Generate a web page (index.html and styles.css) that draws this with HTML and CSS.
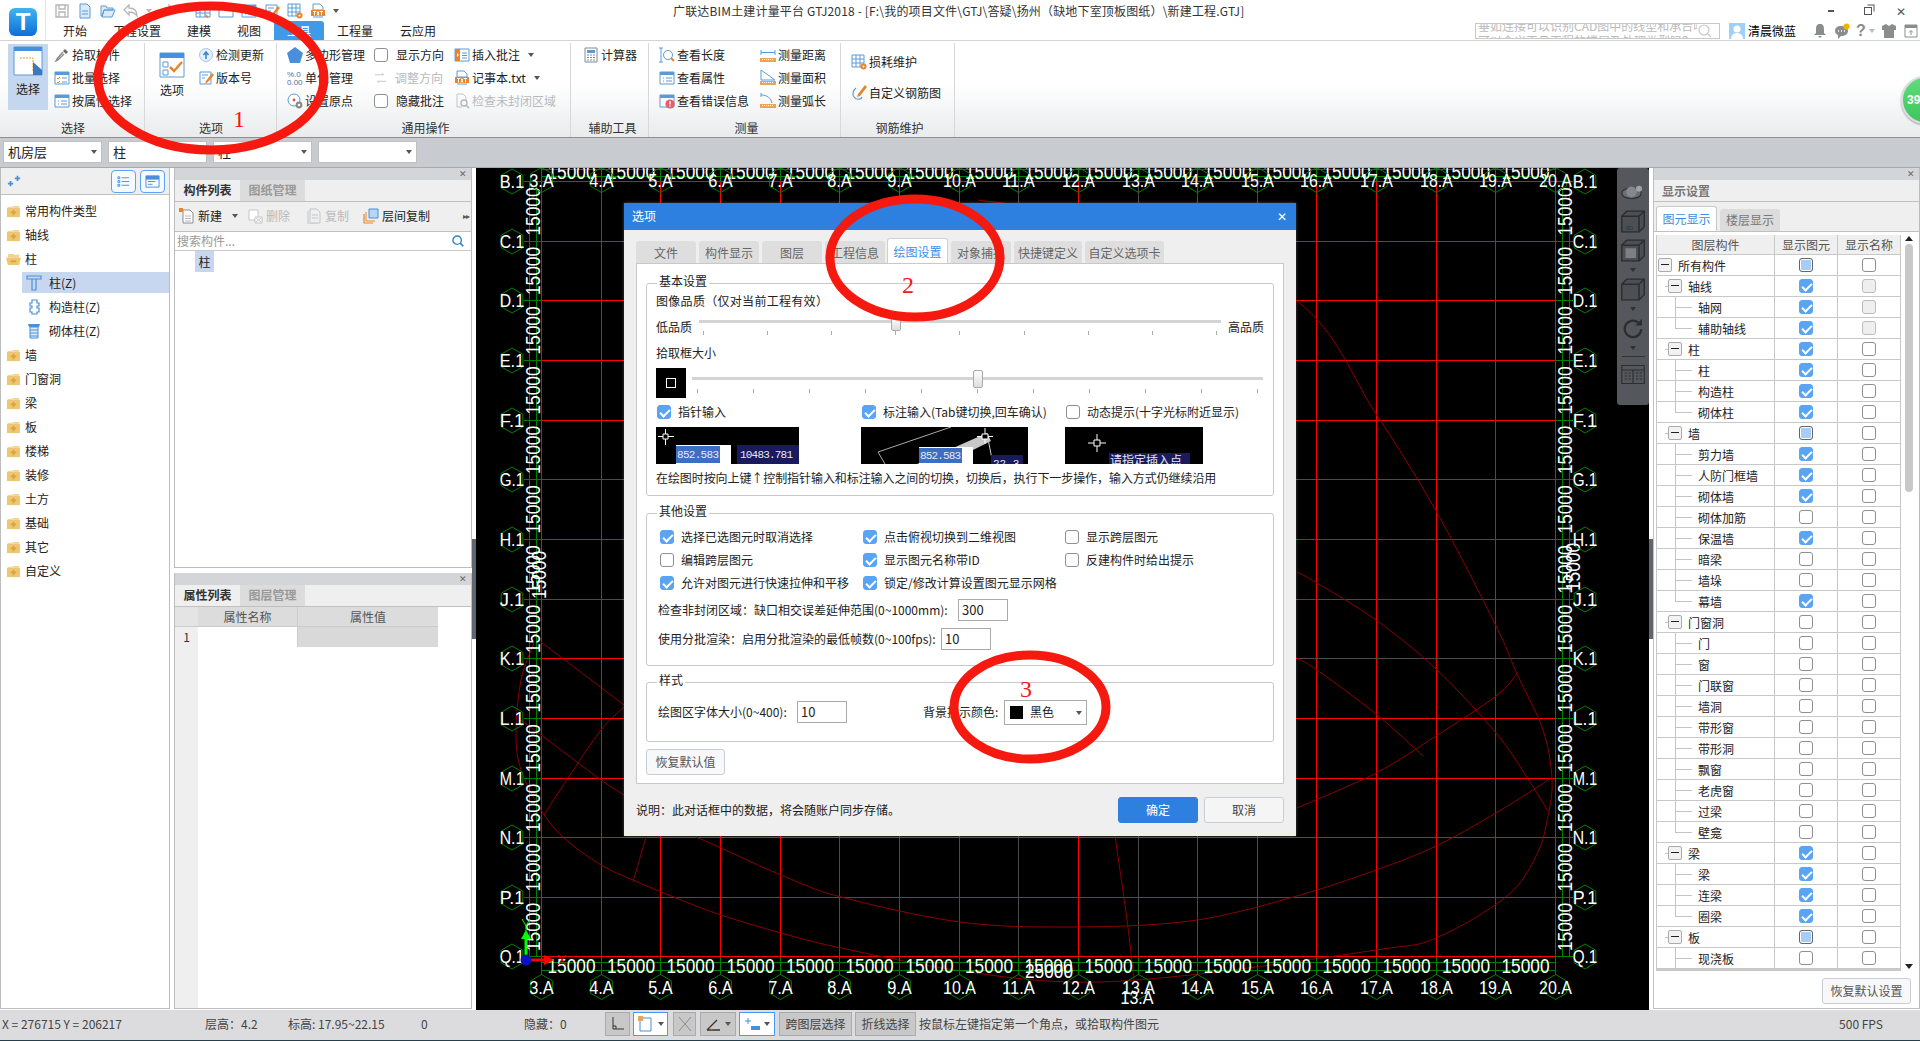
FILE: index.html
```html
<!DOCTYPE html>
<html lang="zh-CN">
  <head>
    <meta charset="UTF-8" />
    <title>广联达BIM土建计量平台 GTJ2018</title>
    <link rel="stylesheet" href="styles.css">
  </head>
  <body>
    <svg class="sprite" width="0" height="0">
      <symbol id="i-folder" viewBox="0 0 16 14"><path d="M2 2h5l1-1h6v2H2z" fill="#f3d28f"/><path d="M1 3h14v10H1z" fill="#efc671"/><path d="M7 5h2v2h2v2H9v2H7V9H5V7h2z" fill="#d9a441"/></symbol>
      <symbol id="i-folder-open" viewBox="0 0 16 14"><path d="M2 1h6l1 1h5v3H2z" fill="#f3d28f"/><path d="M0 5h16l-2 8H2z" fill="#efc671"/><path d="M5 8h6v2H5z" fill="#d9a441"/></symbol>
      <symbol id="i-save" viewBox="0 0 16 16"><path d="M2 2h12v12H2z M5 2v4h6V2 M5 14V9h6v5" fill="none" stroke="#b4b7ba" stroke-width="1.4"/></symbol>
      <symbol id="i-new" viewBox="0 0 16 16"><path d="M3 1h7l3 3v11H3z" fill="#dcebfa" stroke="#5b9bd5"/><path d="M5 8h6M5 11h6" stroke="#5b9bd5"/></symbol>
      <symbol id="i-open" viewBox="0 0 16 16"><path d="M1 3h5l1 2h6v2H4l-2 6H1z M4 7h11l-3 7H2z" fill="#dcebfa" stroke="#5b9bd5"/></symbol>
      <symbol id="i-undo" viewBox="0 0 16 16"><path d="M6 2 1 7l5 5V9c3 0 6 1 8 4 0-5-3-8-8-8z" fill="none" stroke="#b4b7ba" stroke-width="1.3"/></symbol>
      <symbol id="i-redo" viewBox="0 0 16 16"><path d="M10 2l5 5-5 5V9C7 9 4 10 2 13c0-5 3-8 8-8z" fill="none" stroke="#b4b7ba" stroke-width="1.3"/></symbol>
      <symbol id="i-grid" viewBox="0 0 16 16"><path d="M1 2h14v12H1z M1 6h14 M1 10h14 M5 2v12 M10 2v12" fill="none" stroke="#5b9bd5"/><path d="M9 10l5 4-2 1z" fill="#e8842b"/></symbol>
      <symbol id="i-win" viewBox="0 0 16 16"><path d="M1 2h14v12H1z" fill="#fff" stroke="#5b9bd5"/><path d="M1 2h14v3H1z" fill="#5b9bd5"/></symbol>
      <symbol id="i-win-check" viewBox="0 0 16 16"><use href="#i-win"/><path d="M3 8l1 1 2-2M3 12l1 1 2-2" fill="none" stroke="#e8842b"/><path d="M8 8h5M8 12h5" stroke="#5b9bd5"/></symbol>
      <symbol id="i-win-list" viewBox="0 0 16 16"><use href="#i-win"/><path d="M4 8h1M4 11h1M7 8h6M7 11h6" stroke="#5b9bd5"/></symbol>
      <symbol id="i-win-err" viewBox="0 0 16 16"><use href="#i-win"/><circle cx="11" cy="11" r="4.6" fill="#e2606a"/><path d="M11 8v3.4M11 12.6v1.2" stroke="#fff" stroke-width="1.4"/></symbol>
      <symbol id="i-picker" viewBox="0 0 16 16"><path d="M11 2l3 3-2 2-3-3z" fill="#666"/><path d="M9 5 3 12l-1 2 2-1 6-6" fill="none" stroke="#8a8d90" stroke-width="1.4"/></symbol>
      <symbol id="i-update" viewBox="0 0 16 16"><circle cx="8" cy="8" r="6.5" fill="#e6f0fa" stroke="#a8c6e6"/><path d="M8 12V6M5.5 8 8 5l2.5 3" fill="none" stroke="#3d85d0" stroke-width="1.6"/></symbol>
      <symbol id="i-version" viewBox="0 0 16 16"><path d="M2 2h11v12H2z M4 5h6 M4 8h3" fill="none" stroke="#5b9bd5"/><path d="M14 3 8 11l-1 3 3-2 6-7z" fill="#e8842b"/></symbol>
      <symbol id="i-pentagon" viewBox="0 0 16 16"><path d="M8 0l8 6-3 10H3L0 6z" fill="#4a8fdc"/></symbol>
      <symbol id="i-origin" viewBox="0 0 16 16"><circle cx="7" cy="7" r="6" fill="#fff" stroke="#5b9bd5"/><circle cx="7" cy="7" r="1.4" fill="#d9534f"/><circle cx="12" cy="12" r="3.4" fill="#8a8d90"/><circle cx="12" cy="12" r="1.2" fill="#fff"/></symbol>
      <symbol id="i-note" viewBox="0 0 16 16"><path d="M1 2h14v12H1z" fill="#fff" stroke="#5b9bd5"/><path d="M1 2h5v12H1z" fill="#e8842b"/><path d="M3 6l2 2-2 2z" fill="#fff"/><path d="M8 6h5M8 8.5h5M8 11h5" stroke="#5b9bd5"/></symbol>
      <symbol id="i-txt" viewBox="0 0 16 16"><path d="M3 1h7l3 3v3H3z" fill="#fff" stroke="#5b9bd5"/><path d="M1 7h14v6H1z" fill="#e8842b"/><path d="M3 14h10" stroke="#5b9bd5"/><path d="M3 8.500h3M4.500 8.500v4M7 8.500l2 4M9 8.500l-2 4M10 8.500h3M11.500 8.500v4" stroke="#fff" fill="none"/></symbol>
      <symbol id="i-arrows" viewBox="0 0 16 16"><path d="M1 4h11l-2-2M15 12H4l2 2" fill="none" stroke="#c3c5c7" stroke-width="1.2"/></symbol>
      <symbol id="i-check-gap" viewBox="0 0 16 16"><path d="M3 1h6l3 3v4M3 1v13h5" fill="none" stroke="#c3c5c7"/><circle cx="10" cy="10" r="3" fill="none" stroke="#b4b7ba" stroke-width="1.3"/><path d="M12 12l3 3" stroke="#b4b7ba" stroke-width="1.5"/></symbol>
      <symbol id="i-calc" viewBox="0 0 16 16"><path d="M2 1h12v14H2z" fill="#fff" stroke="#7c8b9a"/><path d="M4 3h8v3H4z" fill="#5b9bd5"/><path d="M4 8h2M7 8h2M10 8h2M4 10.500h2M7 10.500h2M10 10.500h2M4 13h2M7 13h2M10 13h2" stroke="#7c8b9a"/></symbol>
      <symbol id="i-look-len" viewBox="0 0 16 16"><path d="M2 1v14M0 1h4M0 15h4" fill="none" stroke="#5b9bd5"/><circle cx="9" cy="8" r="4.500" fill="#fff" stroke="#5b9bd5"/><path d="M12 11l3 3" stroke="#e8842b" stroke-width="2"/></symbol>
      <symbol id="i-ruler" viewBox="0 0 16 16"><path d="M0 11h16v4H0z" fill="#e8a35f"/><path d="M2 12.500h12" stroke="#fff" stroke-dasharray="1 1"/></symbol>
      <symbol id="i-m-dist" viewBox="0 0 16 16"><use href="#i-ruler"/><path d="M1 3v5M15 3v5M1 5.500h14" fill="none" stroke="#5b9bd5"/></symbol>
      <symbol id="i-m-area" viewBox="0 0 16 16"><use href="#i-ruler"/><path d="M1 0v10h14z" fill="#fff" stroke="#5b9bd5"/></symbol>
      <symbol id="i-m-arc" viewBox="0 0 16 16"><use href="#i-ruler"/><path d="M1 2c6 0 10 3 11 8M1 0v4" fill="none" stroke="#5b9bd5"/></symbol>
      <symbol id="i-loss" viewBox="0 0 16 16"><path d="M1 1h12v12H1z M1 5h12 M1 9h12 M5 1v12 M9 1v12" fill="#fff" stroke="#5b9bd5"/><circle cx="12.500" cy="12.500" r="3" fill="#e8842b"/><circle cx="12.500" cy="12.500" r="1" fill="#fff"/></symbol>
      <symbol id="i-rebar" viewBox="0 0 16 16"><path d="M5 3C2 5 1 9 3 12s7 3 8 0" fill="none" stroke="#5b9bd5" stroke-width="1.2"/><path d="M14 0 7 9l-1 3 3-1 7-9z" fill="#e8842b"/></symbol>
      <symbol id="i-doc-new" viewBox="0 0 16 16"><path d="M4 2h7l3 3v10H4z" fill="#fff" stroke="#8a8d90"/><path d="M6 8h6M6 10.500h6M6 13h6" stroke="#b4b7ba"/><path d="M0 0h4v4H0z" fill="#e8842b"/></symbol>
      <symbol id="i-doc-del" viewBox="0 0 16 16"><path d="M2 2h9v10H2z" fill="#fff" stroke="#c3c5c7"/><path d="M8 9h7v6H8zM9 10l5 4M14 10l-5 4" fill="#fff" stroke="#c3c5c7"/></symbol>
      <symbol id="i-doc-copy" viewBox="0 0 16 16"><path d="M4 1h7l3 3v11H4z M2 3v13h9 M6 7h6 M6 10h6" fill="none" stroke="#c3c5c7"/></symbol>
      <symbol id="i-layer-copy" viewBox="0 0 16 16"><path d="M1 6v9h9" fill="none" stroke="#e8842b" stroke-width="1.2"/><path d="M3 4v9h9" fill="none" stroke="#e8842b"/><path d="M6 1h9v9H6z" fill="#b7d6f6" stroke="#4a8fdc"/></symbol>
      <symbol id="i-search" viewBox="0 0 16 16"><circle cx="7" cy="7" r="4.800" fill="none" stroke="#2f86c9" stroke-width="1.600"/><path d="M10.500 10.500 14 14" stroke="#2f86c9" stroke-width="2"/></symbol>
      <symbol id="i-col" viewBox="0 0 16 16"><path d="M1 1h14v3H1z M5 4h6 M6 4v11h4V4" fill="none" stroke="#4a90d9" stroke-width="1.200"/></symbol>
      <symbol id="i-col-struct" viewBox="0 0 16 16"><path d="M6 1h5v3h2v3h-2v2h2v4h-2v2H6v-2H4V9h2V7H4V4h2z" fill="none" stroke="#4a90d9" stroke-width="1.200"/></symbol>
      <symbol id="i-col-brick" viewBox="0 0 16 16"><path d="M2 1h12l-1 3H3z" fill="#4a90d9"/><path d="M4 4h8v11H4z M4 7h8 M4 10h8 M4 13h8" fill="#dcebfa" stroke="#4a90d9"/></symbol>
      <symbol id="i-cube" viewBox="0 0 32 30"><path d="M1 8h23v21H1z M1 8l7-7h23v21l-7 7 M24 8l7-7" fill="#4c5054" stroke="#2b2e31" stroke-width="2"/></symbol>
    </svg>

    <header class="titlebar">
      <div class="logo-cell">
        <div class="logo">T</div>
      </div>
      <div class="title-main">
        <div class="qat-row">
          <div class="qat">
            <svg class="ic"><use href="#i-save"/></svg>
            <svg class="ic"><use href="#i-new"/></svg>
            <svg class="ic"><use href="#i-open"/></svg>
            <svg class="ic"><use href="#i-undo"/></svg>
            <span class="caret gray"></span>
            <svg class="ic"><use href="#i-redo"/></svg>
            <span class="caret gray"></span>
            <svg class="ic"><use href="#i-grid"/></svg>
            <svg class="ic"><use href="#i-win"/></svg>
            <svg class="ic"><use href="#i-win-list"/></svg>
            <svg class="ic"><use href="#i-version"/></svg>
            <svg class="ic"><use href="#i-loss"/></svg>
            <svg class="ic"><use href="#i-txt"/></svg>
            <span class="caret"></span>
          </div>
          <div class="app-title">广联达BIM土建计量平台 GTJ2018 - [F:\我的项目文件\GTJ\答疑\扬州（缺地下室顶板图纸）\新建工程.GTJ]</div>
          <div class="win-btns">
            <span class="win-min"></span>
            <span class="win-max"></span>
            <span class="win-close">✕</span>
          </div>
        </div>
        <div class="tab-row">
          <nav class="ribbon-tabs">
            <span class="rtab t-a">开始</span>
            <span class="rtab t-b">工程设置</span>
            <span class="rtab t-c">建模</span>
            <span class="rtab t-d">视图</span>
            <span class="rtab t-e active">工具</span>
            <span class="rtab t-f">工程量</span>
            <span class="rtab t-g">云应用</span>
          </nav>
          <div class="help-search">
            <div class="help-text">
              <span>垂如连接可以识别CAD图中的线型和承台吗？</span>
              <span>可以个义工且工程的楼层及处理类型吗？</span>
            </div>
            <svg class="ic search-gray" viewBox="0 0 16 16"><circle cx="7" cy="7" r="5" fill="none" stroke="#c8c8c8" stroke-width="1.200"/><path d="M11 11l3 3" stroke="#c8c8c8" stroke-width="1.200"/></svg>
          </div>
          <div class="avatar"><svg viewBox="0 0 16 16"><path d="M0 0h16v16H0z" fill="#9fd0f7"/><circle cx="8" cy="6" r="3.500" fill="#fff"/><path d="M2 16c0-4 3-6 6-6s6 2 6 6z" fill="#fff"/></svg></div>
          <span class="user-name">清晨微蓝</span>
          <div class="user-icons">
            <svg class="ic" viewBox="0 0 16 16"><path d="M8 1c3 0 4 2 4 5v4l2 2H2l2-2V6c0-3 1-5 4-5zM6 13h4l-2 2z" fill="#8a8d90"/></svg>
            <svg class="ic" viewBox="0 0 16 16"><path d="M7 3c4 0 7 2 7 5s-3 5-7 5l-3 3v-4C2 11 1 10 1 8c0-3 2-5 6-5z" fill="#8a8d90"/><circle cx="12.500" cy="3.500" r="3" fill="#f0b400"/><path d="M4 8h1M7 8h1M10 8h1" stroke="#fff" stroke-width="1.500"/></svg>
            <span class="help-mark">?</span><span class="caret gray"></span>
            <svg class="ic" viewBox="0 0 16 16"><path d="M5 1 1 3v4h2v8h10V7h2V3l-4-2-3 2z" fill="#8a8d90"/></svg>
            <svg class="ic" viewBox="0 0 16 16"><path d="M2 2h12v12H2z" fill="#fff" stroke="#8a8d90"/><path d="M2 2h12v3H2z" fill="#8a8d90"/><path d="M8 12V8M6 9.500 8 7.500l2 2" fill="none" stroke="#8a8d90"/></svg>
          </div>
        </div>
      </div>
    </header>

    <section class="ribbon">
      <div class="rb-group g-select">
        <div class="rb-body">
          <div class="rb-big selected">
            <svg class="big-ic" viewBox="0 0 30 30"><path d="M1 1h28v28H1z" fill="#fff" stroke="#5b9bd5"/><path d="M1 1h28v4H1z" fill="#4a8fdc"/><path d="M7 12h13v14" fill="none" stroke="#e8a01f" stroke-dasharray="2 1"/><path d="M20 16l9 8v5h-9z" fill="#3a78c2"/></svg>
            <span>选择</span>
          </div>
          <div class="rb-col">
            <div class="rb-item"><svg class="ic"><use href="#i-picker"/></svg>拾取构件</div>
            <div class="rb-item"><svg class="ic"><use href="#i-win-check"/></svg>批量选择</div>
            <div class="rb-item"><svg class="ic"><use href="#i-win-list"/></svg>按属性选择</div>
          </div>
        </div>
        <div class="rb-label">选择</div>
      </div>
      <div class="rb-group g-option">
        <div class="rb-body">
          <div class="rb-big plain">
            <svg class="big-ic opt" viewBox="0 0 26 26"><path d="M1 1h24v24H1z" fill="#fff" stroke="#5b9bd5"/><path d="M1 1h24v5H1z" fill="#4a8fdc"/><path d="M4 10h5v5H4z M4 18h5v5H4z" fill="none" stroke="#5b9bd5"/><path d="M11 15l4 4 8-9" fill="none" stroke="#e8842b" stroke-width="2.500"/></svg>
            <span>选项</span>
          </div>
          <div class="rb-col">
            <div class="rb-item"><svg class="ic"><use href="#i-update"/></svg>检测更新</div>
            <div class="rb-item"><svg class="ic"><use href="#i-version"/></svg>版本号</div>
          </div>
        </div>
        <div class="rb-label">选项</div>
      </div>
      <div class="rb-group g-common">
        <div class="rb-body">
          <div class="rb-col w-87">
            <div class="rb-item"><svg class="ic"><use href="#i-pentagon"/></svg>多边形管理</div>
            <div class="rb-item"><svg class="ic" viewBox="0 0 16 16"><text class="unit-text" x="0" y="7">%.0</text><text class="unit-text" x="0" y="15">0.00</text></svg>单位管理</div>
            <div class="rb-item"><svg class="ic"><use href="#i-origin"/></svg>设置原点</div>
          </div>
          <div class="rb-col w-80">
            <div class="rb-item tight"><span class="cb"></span>显示方向</div>
            <div class="rb-item tight dim"><svg class="ic"><use href="#i-arrows"/></svg>调整方向</div>
            <div class="rb-item tight"><span class="cb"></span>隐藏批注</div>
          </div>
          <div class="rb-col">
            <div class="rb-item"><svg class="ic"><use href="#i-note"/></svg>插入批注<span class="caret"></span></div>
            <div class="rb-item"><svg class="ic"><use href="#i-txt"/></svg>记事本.txt<span class="caret"></span></div>
            <div class="rb-item dim"><svg class="ic"><use href="#i-check-gap"/></svg>检查未封闭区域</div>
          </div>
        </div>
        <div class="rb-label">通用操作</div>
      </div>
      <div class="rb-group g-aux">
        <div class="rb-body">
          <div class="rb-col">
            <div class="rb-item"><svg class="ic"><use href="#i-calc"/></svg>计算器</div>
          </div>
        </div>
        <div class="rb-label">辅助工具</div>
      </div>
      <div class="rb-group g-measure">
        <div class="rb-body">
          <div class="rb-col w-101">
            <div class="rb-item"><svg class="ic"><use href="#i-look-len"/></svg>查看长度</div>
            <div class="rb-item"><svg class="ic"><use href="#i-win-list"/></svg>查看属性</div>
            <div class="rb-item"><svg class="ic"><use href="#i-win-err"/></svg>查看错误信息</div>
          </div>
          <div class="rb-col">
            <div class="rb-item"><svg class="ic"><use href="#i-m-dist"/></svg>测量距离</div>
            <div class="rb-item"><svg class="ic"><use href="#i-m-area"/></svg>测量面积</div>
            <div class="rb-item"><svg class="ic"><use href="#i-m-arc"/></svg>测量弧长</div>
          </div>
        </div>
        <div class="rb-label">测量</div>
      </div>
      <div class="rb-group g-rebar">
        <div class="rb-body">
          <div class="rb-col wide-rows">
            <div class="rb-item"><svg class="ic"><use href="#i-loss"/></svg>损耗维护</div>
            <div class="rb-item"><svg class="ic"><use href="#i-rebar"/></svg>自定义钢筋图</div>
          </div>
        </div>
        <div class="rb-label">钢筋维护</div>
      </div>
    </section>

    <div class="combo-bar">
      <div class="combo">机房层<span class="caret"></span></div>
      <div class="combo">柱<span class="caret"></span></div>
      <div class="combo">柱<span class="caret"></span></div>
      <div class="combo"><span class="caret"></span></div>
    </div>

    <main class="workspace">
      <aside class="nav-panel">
        <div class="nav-head">
          <svg class="ic plus-pair" viewBox="0 0 16 16"><path d="M3 8h2v2h2v2H5v2H3v-2H1v-2h2zM11 2h2v2h2v2h-2v2h-2V6H9V4h2z" fill="#4a8fdc"/></svg>
          <div class="nav-btns">
            <span class="nav-btn"><svg viewBox="0 0 16 16"><path d="M2 3h2v2H2zM2 7h2v2H2zM2 11h2v2H2zM6 4h8M6 8h8M6 12h8" fill="none" stroke="#4a8fdc"/></svg></span>
            <span class="nav-btn"><svg viewBox="0 0 16 16"><path d="M1 2h14v12H1z" fill="none" stroke="#4a8fdc"/><path d="M1 2h14v4H1z" fill="#4a8fdc"/><path d="M3 8h8M3 11h5" stroke="#4a8fdc"/></svg></span>
          </div>
        </div>
        <ul class="tree">
          <li class="tree-row"><svg class="fold"><use href="#i-folder"/></svg>常用构件类型</li>
          <li class="tree-row"><svg class="fold"><use href="#i-folder"/></svg>轴线</li>
          <li class="tree-row"><svg class="fold"><use href="#i-folder-open"/></svg>柱</li>
          <li class="tree-row sub sel"><svg class="ic"><use href="#i-col"/></svg>柱(Z)</li>
          <li class="tree-row sub"><svg class="ic"><use href="#i-col-struct"/></svg>构造柱(Z)</li>
          <li class="tree-row sub"><svg class="ic"><use href="#i-col-brick"/></svg>砌体柱(Z)</li>
          <li class="tree-row"><svg class="fold"><use href="#i-folder"/></svg>墙</li>
          <li class="tree-row"><svg class="fold"><use href="#i-folder"/></svg>门窗洞</li>
          <li class="tree-row"><svg class="fold"><use href="#i-folder"/></svg>梁</li>
          <li class="tree-row"><svg class="fold"><use href="#i-folder"/></svg>板</li>
          <li class="tree-row"><svg class="fold"><use href="#i-folder"/></svg>楼梯</li>
          <li class="tree-row"><svg class="fold"><use href="#i-folder"/></svg>装修</li>
          <li class="tree-row"><svg class="fold"><use href="#i-folder"/></svg>土方</li>
          <li class="tree-row"><svg class="fold"><use href="#i-folder"/></svg>基础</li>
          <li class="tree-row"><svg class="fold"><use href="#i-folder"/></svg>其它</li>
          <li class="tree-row"><svg class="fold"><use href="#i-folder"/></svg>自定义</li>
        </ul>
      </aside>

      <div class="mid-col">
        <section class="panel list-panel">
          <div class="dock-bar"><span class="dock-x">✕</span></div>
          <div class="panel-tabs">
            <span class="ptab active">构件列表</span>
            <span class="ptab">图纸管理</span>
          </div>
          <div class="list-tools">
            <span class="tool w-new"><svg class="ic"><use href="#i-doc-new"/></svg>新建<span class="caret"></span></span>
            <span class="tool off w-del"><svg class="ic"><use href="#i-doc-del"/></svg>删除</span>
            <span class="tool off w-copy"><svg class="ic"><use href="#i-doc-copy"/></svg>复制</span>
            <span class="tool"><svg class="ic"><use href="#i-layer-copy"/></svg>层间复制</span>
            <span class="more">▸▸</span>
          </div>
          <div class="search-row">
            <span>搜索构件...</span>
            <svg class="ic"><use href="#i-search"/></svg>
          </div>
          <div class="list-body">
            <span class="list-item">柱</span>
          </div>
        </section>
        <section class="panel prop-panel">
          <div class="dock-bar"><span class="dock-x">✕</span></div>
          <div class="panel-tabs">
            <span class="ptab active">属性列表</span>
            <span class="ptab">图层管理</span>
          </div>
          <div class="prop-body">
            <div class="prop-index">
              <div class="prop-corner"></div>
              <div class="prop-num">1</div>
            </div>
            <div class="prop-table">
              <div class="prop-head"><span class="c-name">属性名称</span><span class="c-val">属性值</span></div>
              <div class="prop-line"><span class="c-name"></span><span class="c-val filled"></span></div>
            </div>
          </div>
        </section>
      </div>

      <div class="splitter"></div>

      <div class="canvas-wrap">
        <svg id="cad" class="cad" viewBox="476 168 1173 842"></svg>
        <div class="view-tools">
          <svg viewBox="0 0 32 22"><ellipse cx="14" cy="12" rx="13" ry="7" fill="#6a6e72" stroke="#2b2e31" stroke-width="1.500"/><circle cx="14" cy="10" r="7" fill="#85898d"/><circle cx="24" cy="6" r="4" fill="#a0a4a8"/></svg>
          <svg viewBox="0 0 32 30"><use href="#i-cube"/><text class="cube-text" x="6" y="26">3D</text></svg>
          <svg viewBox="0 0 32 30"><use href="#i-cube"/><path d="M6 12h14v13H6z" fill="#7c8084"/></svg>
          <span class="caret dark"></span>
          <svg viewBox="0 0 32 30"><use href="#i-cube"/></svg>
          <span class="caret dark"></span>
          <svg viewBox="0 0 32 30"><path d="M27 16a11 11 0 1 1-4-9" fill="none" stroke="#2b2e31" stroke-width="3"/><path d="M28 2v9h-9z" fill="#2b2e31"/></svg>
          <span class="caret dark"></span>
          <div class="view-sep"></div>
          <svg viewBox="0 0 32 30"><path d="M1 3h30v24H1z M1 9h30 M16 9v18 M5 13h3M5 17h3M5 21h3M10 13h3M10 17h3M10 21h3M20 13h3M20 17h3M20 21h3M25 13h3M25 17h3M25 21h3" fill="none" stroke="#2b2e31" stroke-width="1.500"/></svg>
        </div>
      </div>

      <div class="splitter"></div>

      <aside class="display-panel">
        <div class="dock-bar"><span class="dock-x">✕</span></div>
        <div class="display-title">显示设置</div>
        <div class="display-tabs">
          <span class="dtab active">图元显示</span>
          <span class="dtab">楼层显示</span>
        </div>
        <div class="display-table">
          <div class="dt-main">
            <div class="dt-head">
              <span class="dt-c1">图层构件</span>
              <span class="dt-c2">显示图元</span>
              <span class="dt-c3">显示名称</span>
            </div>
            <div id="layerRows"></div>
          </div>
          <div class="dt-scroll">
            <span class="arrow-up"></span>
            <span class="dt-thumb"></span>
            <span class="arrow-down"></span>
          </div>
        </div>
        <div class="display-foot"><button class="reset-btn">恢复默认设置</button></div>
      </aside>
    </main>

    <footer class="statusbar">
      <span class="st-xy">X = 276715 Y = 206217</span>
      <span class="st-h">层高：4.2</span>
      <span class="st-z">标高: 17.95~22.15</span>
      <span class="st-n">0</span>
      <span class="st-hide">隐藏：0</span>
      <span class="st-btn s-1"><svg class="ic" viewBox="0 0 16 16"><path d="M3 1v12h11M3 10h3v3" fill="none" stroke="#333"/></svg></span>
      <span class="st-btn on s-2"><svg class="ic" viewBox="0 0 16 16"><path d="M2 2h11v13H2z" fill="#fff" stroke="#4a8fdc"/><path d="M0 0h5v5H0z" fill="#e8a35f"/></svg><span class="caret"></span></span>
      <span class="st-btn s-3"><svg class="ic" viewBox="0 0 16 16"><path d="M2 1l12 14M14 1 2 15" stroke="#8a8d90"/></svg></span>
      <span class="st-btn s-4"><svg class="ic" viewBox="0 0 16 16"><path d="M2 14h13M2 14 12 4" stroke="#333" stroke-width="1.300"/><path d="M5 11l2 3" stroke="#e8842b"/></svg><span class="caret"></span></span>
      <span class="st-btn on s-5"><svg class="ic" viewBox="0 0 16 16"><path d="M1 5h6M4 2v6" stroke="#4a8fdc"/><path d="M7 10h9v4H7z" fill="#4a8fdc"/></svg><span class="caret"></span></span>
      <span class="st-btn text s-6">跨图层选择</span>
      <span class="st-btn text s-7">折线选择</span>
      <span class="st-hint">按鼠标左键指定第一个角点，或拾取构件图元</span>
      <span class="st-fps">500 FPS</span>
    </footer>

    <!-- Options dialog floats above the drawing -->
    <div class="dialog">
      <div class="dlg-title"><span>选项</span><span class="dlg-x">✕</span></div>
      <div class="dlg-tabs">
        <span class="dtb">文件</span>
        <span class="dtb">构件显示</span>
        <span class="dtb">图层</span>
        <span class="dtb">工程信息</span>
        <span class="dtb active">绘图设置</span>
        <span class="dtb">对象捕捉</span>
        <span class="dtb w68">快捷键定义</span>
        <span class="dtb w79">自定义选项卡</span>
      </div>
      <div class="dlg-page">
        <div class="group g-basic">
          <span class="legend">基本设置</span>
          <div class="line wide-line">图像品质（仅对当前工程有效）</div>
          <div class="slider-row quality">
            <span>低品质</span>
            <div class="slider s-quality">
              <span class="handle"></span>
              <div class="ticks"><i></i><i></i><i></i><i></i><i></i><i></i><i></i><i></i><i></i></div>
            </div>
            <span>高品质</span>
          </div>
          <div class="line pick-title">拾取框大小</div>
          <div class="slider-row pick">
            <span class="pick-box"><i></i></span>
            <div class="slider s-pick">
              <span class="handle"></span>
              <div class="ticks"><i></i><i></i><i></i><i></i><i></i><i></i><i></i><i></i><i></i><i></i><i></i></div>
            </div>
          </div>
          <div class="three-col checks-top">
            <label class="chk"><span class="cb on"></span>指针输入</label>
            <label class="chk"><span class="cb on"></span>标注输入(Tab键切换,回车确认)</label>
            <label class="chk"><span class="cb"></span>动态提示(十字光标附近显示)</label>
          </div>
          <div class="three-col previews">
            <svg class="prev" width="143" height="37">
              <path d="M9.500 2v16M2 9.500h16" stroke="#fff"/><path d="M7 7h5v5H7z" fill="#000" stroke="#fff"/>
              <path d="M20 18h55v19H20z" fill="#fff"/><path d="M20 19h44v17H20z" fill="#3a6fc4"/>
              <text class="pv-text" x="21" y="31" textLength="42">852.583</text>
              <path d="M81 18h62v19H81z" fill="#1a1a5e"/>
              <text class="pv-text" x="84" y="31" textLength="53">10483.781</text>
            </svg>
            <svg class="prev" width="167" height="37">
              <path d="M17 25 90 0M17 25l7 12" stroke="#aaa" fill="none"/>
              <path d="M56 37 126 6l4 8-46 23z" fill="#c8c8c8"/>
              <path d="M124 1v16M116 9.500h16" stroke="#fff"/><path d="M121 7h6v5h-6z" fill="#000" stroke="#fff"/>
              <path d="M127 12l5 25" stroke="#ccc"/>
              <path d="M58 20h54v17H58z" fill="#fff"/><path d="M58 21h43v15H58z" fill="#3a6fc4"/>
              <text class="pv-text" x="59" y="32" textLength="41">852.583</text>
              <path d="M130 28h32v9h-32z" fill="#1a1a5e"/>
              <text class="pv-text" x="132" y="40">22.3</text>
            </svg>
            <svg class="prev" width="138" height="37">
              <path d="M32 7v18M23 16h18" stroke="#fff"/><path d="M29 13h6v6h-6z" fill="#000" stroke="#fff"/>
              <path d="M44 26h81v11H44z" fill="#1a1a5e"/>
              <text class="pv-text cjk" x="45" y="38">请指定插入点</text>
            </svg>
          </div>
          <div class="line tip">在绘图时按向上键↑控制指针输入和标注输入之间的切换，切换后，执行下一步操作，输入方式仍继续沿用</div>
        </div>

        <div class="group g-other">
          <span class="legend">其他设置</span>
          <div class="three-col other-checks">
            <label class="chk"><span class="cb on"></span>选择已选图元时取消选择</label>
            <label class="chk"><span class="cb on"></span>点击俯视切换到二维视图</label>
            <label class="chk"><span class="cb"></span>显示跨层图元</label>
            <label class="chk"><span class="cb"></span>编辑跨层图元</label>
            <label class="chk"><span class="cb on"></span>显示图元名称带ID</label>
            <label class="chk"><span class="cb"></span>反建构件时给出提示</label>
            <label class="chk"><span class="cb on"></span>允许对图元进行快速拉伸和平移</label>
            <label class="chk"><span class="cb on"></span>锁定/修改计算设置图元显示网格</label>
          </div>
          <div class="field-row"><span class="lab-a">检查非封闭区域：缺口相交误差延伸范围(0~1000mm):</span><span class="input">300</span></div>
          <div class="field-row"><span class="lab-b">使用分批渲染：启用分批渲染的最低帧数(0~100fps):</span><span class="input">10</span></div>
        </div>

        <div class="group g-style">
          <span class="legend">样式</span>
          <div class="field-row style-row">
            <span class="lab-c">绘图区字体大小(0~400):</span><span class="input">10</span>
            <span class="bg-label">背景提示颜色:</span>
            <span class="color-select"><i class="swatch"></i>黑色<span class="caret"></span></span>
          </div>
        </div>

        <button class="reset-btn small">恢复默认值</button>
      </div>
      <div class="dlg-foot">
        <span class="dlg-note">说明：此对话框中的数据，将会随账户同步存储。</span>
        <button class="btn-ok">确定</button>
        <button class="btn-cancel">取消</button>
      </div>
    </div>

    <div class="ball">39</div>

    <!-- Hand drawn red marks on top of the whole screenshot -->
    <svg class="marks" viewBox="0 0 1920 1041">
      <ellipse cx="211" cy="78" rx="113" ry="72"/>
      <ellipse cx="915" cy="258" rx="85" ry="59"/>
      <ellipse cx="1030" cy="707" rx="76" ry="52"/>
      <text x="239" y="127">1</text>
      <text x="908" y="293">2</text>
      <text x="1026" y="697">3</text>
    </svg>

    <script src="script.js"></script>
  </body>
</html>
```

FILE: styles.css
```css
* { box-sizing: border-box; }
html, body {
  margin: 0;
  padding: 0;
  width: 1920px;
  height: 1041px;
  overflow: hidden;
}
body {
  position: relative;
  display: flex;
  flex-direction: column;
  background: #fff;
  color: #222;
  font-family: "Noto Sans CJK SC", "Liberation Sans", sans-serif;
  font-size: 12px;
  line-height: 16px;
}
.sprite { position: absolute; }
.ic { width: 16px; height: 16px; flex: none; }

.caret {
  display: inline-block;
  width: 0;
  height: 0;
  border-left: 3px solid transparent;
  border-right: 3px solid transparent;
  border-top: 4px solid #555;
}
.caret.gray { border-top-color: #bbb; }
.caret.dark { border-top-color: #2f3235; flex: none; }

/* title bar + ribbon tabs */
.titlebar { display: flex; flex: none; height: 41px; border-bottom: 1px solid #d4d4d4; }
.logo-cell { width: 46px; padding: 8px 0 0 9px; border-right: 1px solid #e4e4e4; }
.logo {
  width: 28px;
  height: 28px;
  border-radius: 6px;
  background: linear-gradient(#41b4f0, #0d6fd8);
  color: #fff;
  font: bold 24px/28px "Liberation Sans", sans-serif;
  text-align: center;
}
.title-main { flex: 1; display: flex; flex-direction: column; }
.qat-row { display: flex; height: 21px; align-items: center; }
.qat { width: 627px; display: flex; align-items: center; gap: 7px; padding-left: 8px; }
.app-title { color: #333; white-space: nowrap; margin-top: 1px; letter-spacing: 0.17px; }
.win-btns { margin-left: auto; display: flex; align-items: center; gap: 0; }
.win-min { width: 6px; height: 2px; background: #555; margin-right: 30px; }
.win-max { width: 8px; height: 8px; border: 1.5px solid #555; margin-right: 24px; box-shadow: 2px -2px 0 -0.5px #fff, 3px -3px 0 -0.5px #555; }
.win-close { width: 24px; color: #555; font-size: 12px; }
.tab-row { display: flex; height: 19px; align-items: center; }
.ribbon-tabs { width: 1429px; display: flex; height: 19px; }
.rtab { line-height: 19px; white-space: nowrap; }
.t-a { margin-left: 17px; }
.t-b { margin-left: 26px; }
.t-c { margin-left: 26px; }
.t-d { margin-left: 26px; }
.t-e { margin-left: 13px; width: 50px; text-align: center; }
.t-f { margin-left: 13px; }
.t-g { margin-left: 27px; }
.rtab.active { background: #3f9be8; color: #fff; border-radius: 3px 3px 0 0; }
.help-search {
  width: 245px;
  height: 16px;
  border: 1px solid #c8c8c8;
  display: flex;
  align-items: center;
  overflow: hidden;
  color: #bbb;
}
.help-text { flex: 1; height: 14px; overflow: hidden; padding-left: 2px; white-space: nowrap; line-height: 15px; }
.help-text span { display: block; height: 15px; overflow: hidden; }
.help-text span:first-child { margin-top: -6px; }
.search-gray { margin-right: 6px; }
.avatar { width: 16px; height: 16px; margin-left: 9px; }
.avatar svg { display: block; }
.user-name { margin-left: 3px; color: #000; width: 64px; }
.user-icons { display: flex; align-items: center; gap: 6px; }
.help-mark { color: #8a8d90; font: bold 16px/16px "Liberation Sans", sans-serif; margin-right: -3px; }

/* ribbon */
.ribbon {
  display: flex;
  flex: none;
  height: 97px;
  background: linear-gradient(#fff 45%, #e9ebec);
  border-bottom: 1px solid #8c8e90;
}
.rb-group {
  display: flex;
  flex-direction: column;
  position: relative;
  border-right: 1px solid #d6d8da;
  margin: 2px 0 0;
}
.g-select { width: 145px; padding-left: 8px; }
.g-option { width: 132px; padding-left: 7px; }
.g-common { width: 294px; padding-left: 10px; }
.g-aux { width: 78px; padding-left: 12px; }
.g-measure { width: 192px; padding-left: 10px; }
.g-rebar { width: 114px; padding-left: 10px; }
.rb-body { display: flex; flex: 1; }
.rb-label { height: 20px; line-height: 22px; text-align: center; color: #333; margin-left: -6px; }
.rb-big { width: 40px; height: 66px; margin-top: 1px; display: flex; flex-direction: column; align-items: center; margin-right: 6px; }
.rb-big.selected { background: #c5d7ee; padding-top: 2px; gap: 5px; }
.rb-big.plain { padding-top: 8px; gap: 4px; }
.big-ic { width: 30px; height: 30px; }
.big-ic.opt { width: 26px; height: 26px; }
.rb-col { display: flex; flex-direction: column; }
.w-87 { width: 87px; }
.w-80 { width: 80px; }
.w-101 { width: 101px; }
.rb-item { display: flex; align-items: center; gap: 2px; height: 23px; white-space: nowrap; }
.rb-item.tight { gap: 8px; }
.rb-item.tight .ic { width: 13px; margin-right: 0; }
.rb-item .caret { margin-left: 6px; }
.rb-item.dim { color: #b8babc; }
.wide-rows { padding-top: 3px; }
.wide-rows .rb-item { height: 31px; }
.unit-text { font: 8px "Liberation Sans", sans-serif; fill: #4b6fa0; }

.cb {
  display: inline-block;
  flex: none;
  position: relative;
  width: 14px;
  height: 14px;
  border: 1px solid #8f8f8f;
  border-radius: 3px;
  background: #fff;
}
.cb.on { background: #5aa4f5; border-color: #5aa4f5; }
.cb.on::after {
  content: "";
  position: absolute;
  left: 4px;
  top: 1px;
  width: 4px;
  height: 8px;
  border: solid #fff;
  border-width: 0 2px 2px 0;
  transform: rotate(45deg);
}
.cb.half { border-color: #666; background: #a6cdf9; box-shadow: inset 0 0 0 1px #fff; }
.cb.off { border-color: #bbb; background: #efefef; }

/* floor / component combos */
.combo-bar { display: flex; flex: none; gap: 6px; height: 29px; padding: 3px 0 0 3px; background: #c8cbcf; }
.combo {
  position: relative;
  width: 99px;
  height: 22px;
  padding-left: 4px;
  background: #fff;
  border: 1px solid #c0c0c0;
  line-height: 20px;
  font-size: 13px;
}
.combo .caret { position: absolute; right: 4px; top: 8px; }

/* main area */
.workspace { display: flex; flex: none; height: 843px; background: #fff; border-top: 1px solid #a8aaac; }
.nav-panel { width: 170px; border: 1px solid #bdbdbd; border-top: 0; margin-bottom: 1px; }
.nav-head { display: flex; align-items: center; justify-content: space-between; height: 27px; padding: 0 4px 0 6px; background: #efefef; border-bottom: 1px solid #c0c0c0; }
.plus-pair { width: 14px; height: 14px; }
.nav-btns { display: flex; gap: 4px; }
.nav-btn { width: 25px; height: 23px; padding: 3px 4px; border: 1px solid #5aa4f5; border-radius: 4px; background: #f6fafe; }
.nav-btn svg { display: block; width: 15px; height: 15px; }
.tree { list-style: none; margin: 4px 0 0; padding: 0; }
.tree-row { display: flex; align-items: center; gap: 4px; height: 24px; padding-left: 5px; white-space: nowrap; }
.fold { width: 15px; height: 13px; flex: none; }
.tree-row.sub { margin-left: 21px; padding-left: 4px; gap: 7px; }
.tree-row.sel { height: 21px; margin-top: 1px; margin-bottom: 2px; background: #c7d7ef; }

.mid-col { width: 298px; margin-left: 4px; display: flex; flex-direction: column; gap: 5px; padding-bottom: 1px; }
.panel { display: flex; flex-direction: column; background: #fff; border: 1px solid #bdbdbd; border-top: 0; }
.list-panel { height: 400px; }
.prop-panel { flex: 1; }
.dock-bar { position: relative; flex: none; height: 12px; background: #d4d5d8; }
.dock-x { position: absolute; right: 4px; top: -2px; font-size: 9px; color: #666; }
.panel-tabs { display: flex; flex: none; height: 22px; background: #efefef; border-bottom: 1px solid #c0c0c0; }
.ptab { width: 65px; line-height: 20px; text-align: center; font-weight: 700; color: #999; background: #dcdcdc; }
.ptab.active { color: #333; background: #efefef; }
.list-tools { display: flex; align-items: center; flex: none; height: 30px; padding: 0 0 1px 4px; background: #efefef; border-bottom: 1px solid #c0c0c0; position: relative; }
.tool { display: flex; align-items: center; gap: 3px; font-size: 12px; white-space: nowrap; }
.tool .caret { margin-left: 7px; }
.tool.off { color: #b8babc; }
.w-new { width: 68px; }
.w-del { width: 59px; }
.w-copy { width: 57px; }
.more { position: absolute; right: 2px; font-size: 8px; color: #555; letter-spacing: -1px; }
.search-row { display: flex; align-items: center; justify-content: space-between; flex: none; height: 19px; padding: 0 3px 0 2px; border-bottom: 1px solid #c8c8c8; color: #999; }
.search-row .ic { width: 14px; height: 14px; margin-right: 3px; }
.list-body { flex: 1; padding-left: 20px; }
.list-item { display: block; width: 19px; height: 21px; line-height: 21px; text-align: center; background: #c7d7ef; }
.prop-body { flex: 1; display: flex; }
.prop-index { width: 23px; background: #efefef; }
.prop-corner { height: 20px; background: #e4e4e4; border-bottom: 1px solid #ccc; }
.prop-num { height: 20px; line-height: 20px; text-align: center; color: #333; }
.prop-table { width: 240px; }
.prop-head, .prop-line { display: flex; height: 20px; }
.prop-head { background: #dcdcdc; border-bottom: 1px solid #ccc; text-align: center; line-height: 19px; color: #555; }
.c-name { width: 100px; border-right: 1px solid #ccc; }
.c-val { flex: 1; }
.c-val.filled { background: #d9d9d9; }

.splitter { position: relative; width: 4px; display: flex; align-items: center; background: #fff; }
.splitter::before { content: ""; width: 4px; height: 100px; background: #5f6670; }

.canvas-wrap { position: relative; width: 1173px; background: #000; }
.cad { display: block; width: 1173px; height: 842px; }
.cad text { font-family: "Liberation Sans", sans-serif; fill: #fff; }
.view-tools {
  position: absolute;
  top: 0;
  right: 0;
  width: 32px;
  height: 237px;
  padding: 13px 4px 0;
  display: flex;
  flex-direction: column;
  align-items: center;
  gap: 6px;
  background: #54585c;
  border-radius: 3px;
}
.view-tools svg { display: block; width: 24px; height: 23px; flex: none; }
.cube-text { font: 8px "Liberation Sans", sans-serif; fill: #2f3235; }
.view-sep { width: 23px; height: 1px; flex: none; background: #2f3235; }

/* display settings */
.display-panel { width: 267px; display: flex; flex-direction: column; background: #fff; border-right: 1px solid #bbb; margin-bottom: 1px; border-bottom: 1px solid #c0c0c0; border-left: 1px solid #c0c0c0; }
.display-title { height: 22px; padding-left: 8px; line-height: 21px; background: #efefef; border-bottom: 1px solid #c0c0c0; font-weight: 700; color: #777; }
.display-tabs { display: flex; align-items: flex-end; gap: 3px; height: 30px; padding-left: 2px; background: #efefef; border-bottom: 1px solid #c0c0c0; }
.dtab { width: 60px; height: 22px; line-height: 22px; text-align: center; color: #777; background: #dcdcdc; border-radius: 3px 3px 0 0; }
.dtab.active { width: 61px; height: 25px; line-height: 24px; color: #3b8ce0; background: #fff; border: 1px solid #c8c8c8; border-bottom: 0; }
.display-table { display: flex; flex: none; margin: 3px 2px 0; height: 736px; }
.dt-main { width: 245px; border-bottom: 2px solid #c8c8c8; border-left: 1px solid #c8c8c8; }
.dt-head { display: flex; height: 20px; line-height: 19px; background: #efefef; border-bottom: 1px solid #c8c8c8; color: #555; text-align: center; }
.dt-c1 { width: 118px; border-right: 1px solid #c8c8c8; }
.dt-c2, .dt-c3 { width: 63px; border-right: 1px solid #c8c8c8; }
.dt-row { display: flex; height: 21px; border-bottom: 1px solid #c8c8c8; }
.dt-name { position: relative; width: 118px; border-right: 1px solid #c8c8c8; line-height: 21px; white-space: nowrap; }
.lv0 { padding-left: 21px; }
.lv1 { padding-left: 31px; }
.lv2 { padding-left: 41px; }
.dt-cell { width: 63px; display: flex; align-items: center; justify-content: center; border-right: 1px solid #c8c8c8; }
.exp {
  position: absolute;
  top: 3px;
  width: 14px;
  height: 14px;
  border: 1px solid #aaa;
  border-radius: 2px;
  background: #f2f2f2;
}
.exp::after { content: ""; position: absolute; left: 2px; top: 5px; width: 8px; height: 1px; background: #222; }
.lv0 .exp { left: 1px; }
.lv1 .exp { left: 11px; }
.lv2::before { content: ""; position: absolute; left: 18px; top: 10px; width: 17px; height: 1px; background: #c4c4c4; }
.lv2::after { content: ""; position: absolute; left: 18px; top: 0; width: 1px; height: 21px; background: #c4c4c4; }
.lv2.last::after { height: 10px; }
.lv1::before { content: ""; position: absolute; left: 8px; top: 10px; width: 3px; height: 1px; background: #c4c4c4; }
.dt-scroll { position: relative; flex: 1; }
.dt-thumb { position: absolute; left: 4px; top: 9px; width: 8px; height: 248px; border-radius: 4px; background: #c8c8c8; }
.arrow-up, .arrow-down { position: absolute; left: 4px; width: 0; height: 0; border-left: 4px solid transparent; border-right: 4px solid transparent; }
.arrow-up { top: 1px; border-bottom: 5px solid #222; }
.arrow-down { top: 729px; border-top: 5px solid #222; }
.display-foot { display: flex; justify-content: flex-end; padding: 7px 8px 0 0; }
.reset-btn {
  width: 89px;
  height: 26px;
  padding: 0;
  border: 1px solid #c8ccd4;
  border-radius: 3px;
  background: #f8f8fa;
  color: #555;
  font: inherit;
}

/* status bar */
.statusbar { display: flex; flex: none; align-items: center; height: 31px; padding: 0 0 2px 2px; background: #dcdcde; border-bottom: 1px solid #24404e; color: #444; white-space: nowrap; }
.st-xy { width: 203px; }
.st-h { width: 83px; }
.st-z { width: 133px; }
.st-n { width: 103px; }
.st-hide { width: 81px; }
.st-btn { display: flex; align-items: center; justify-content: center; gap: 4px; height: 24px; margin-right: 3px; background: #c8c8c8; border: 1px solid #aaa; }
.st-btn.on { background: #fff; border-color: #4a9af0; }
.st-btn.text { color: #444; }
.s-1 { width: 25px; }
.s-2 { width: 35px; }
.s-3 { width: 23px; margin-left: 2px; margin-right: 4px; }
.s-4 { width: 36px; }
.s-5 { width: 36px; margin-right: 4px; }
.s-6 { width: 73px; }
.s-7 { width: 61px; }
.st-fps { margin-left: auto; padding-right: 37px; }

/* dialog */
.dialog {
  position: absolute;
  left: 624px;
  top: 203px;
  width: 672px;
  height: 633px;
  display: flex;
  flex-direction: column;
  background: #efefef;
  box-shadow: 0 0 3px rgba(255, 255, 255, 0.3);
}
.dlg-title { display: flex; justify-content: space-between; flex: none; height: 27px; padding: 0 9px 0 8px; background: #2d7fe0; color: #fff; line-height: 26px; }
.dlg-tabs { display: flex; align-items: flex-end; flex: none; height: 33px; padding-left: 12px; }
.dtb { width: 60px; height: 22px; margin-right: 3px; border-radius: 3px 3px 0 0; background: #dedede; color: #666; line-height: 23px; text-align: center; white-space: nowrap; }
.dtb.active { height: 25px; margin-left: -1px; width: 61px; background: #fff; color: #3b8fe8; line-height: 25px; border: 1px solid #d0d0d0; border-bottom: 0; }
.dtb.w68 { width: 68px; }
.dtb.w79 { width: 79px; }
.dlg-page { flex: none; height: 521px; margin: 0 12px; padding: 19px 9px 0; background: #fff; border: 1px solid #c8c8c8; }
.group { position: relative; border: 1px solid #c8c8c8; border-radius: 3px; padding-left: 9px; }
.legend { position: absolute; left: 10px; top: -11px; padding: 0 2px; background: #fff; line-height: 16px; }
.g-basic { height: 213px; padding-top: 8px; margin-bottom: 17px; }
.g-other { height: 153px; margin-bottom: 16px; padding-top: 14px; }
.g-style { height: 60px; margin-bottom: 7px; padding-top: 18px; padding-left: 10px; }
.line { height: 18px; line-height: 18px; white-space: nowrap; }
.wide-line { letter-spacing: 0.3px; }
.slider-row { display: flex; align-items: flex-start; }
.slider-row.quality { height: 26px; margin-top: 4px; gap: 6px; width: 608px; line-height: 26px; }
.slider { position: relative; }
.s-quality { flex: 1; height: 26px; margin: 0 1px; }
.s-quality::before, .s-pick::before { content: ""; position: absolute; left: 0; right: 0; height: 3px; background: #d4d4d4; }
.s-quality::before { top: 6px; }
.s-pick::before { top: 9px; }
.handle { position: absolute; width: 10px; border: 1px solid #aaa; border-radius: 2px; background: linear-gradient(#fff, #ddd); }
.s-quality .handle { left: 192px; top: 2px; height: 15px; }
.s-pick .handle { left: 281px; top: 2px; height: 18px; }
.ticks { position: absolute; left: 4px; right: 4px; display: flex; justify-content: space-between; }
.ticks i { width: 1px; height: 4px; background: #aaa; }
.s-quality .ticks { top: 17px; }
.s-pick .ticks { top: 21px; left: 5px; right: 5px; }
.pick-title { margin-top: 4px; }
.slider-row.pick { height: 30px; margin-top: 6px; gap: 6px; }
.pick-box { position: relative; width: 30px; height: 30px; background: #000; display: flex; align-items: center; justify-content: center; }
.pick-box i { width: 10px; height: 10px; border: 1px solid #fff; }
.s-pick { width: 571px; height: 30px; }
.three-col { display: grid; grid-template-columns: 205px 204px 1fr; }
.checks-top { height: 18px; margin-top: 5px; padding-left: 1px; }
.chk { display: flex; align-items: center; gap: 7px; height: 18px; white-space: nowrap; }
.previews { margin-top: 6px; height: 37px; }
.prev { display: block; background: #000; }
.pv-text { font: 11px "Liberation Mono", monospace; fill: #e8e8f0; }
.pv-text.cjk { font: 12px "Noto Sans CJK SC", sans-serif; }
.tip { margin-top: 5px; letter-spacing: -0.08px; }
.other-checks { row-gap: 5px; padding-left: 4px; grid-template-columns: 203px 202px 1fr; }
.other-checks .chk { gap: 7px; }
.field-row { display: flex; align-items: center; height: 22px; margin-top: 7px; white-space: nowrap; padding-left: 2px; }
.lab-a { width: 295px; }
.lab-b { width: 278px; }
.lab-c { width: 134px; }
.input { width: 50px; height: 22px; margin-left: 5px; padding-left: 3px; border: 1px solid #aaa; background: #fff; line-height: 20px; font-size: 13px; }
.style-row { margin-top: 0; padding-left: 1px; }
.bg-label { width: 75px; margin-left: 76px; }
.color-select { position: relative; display: flex; align-items: center; width: 83px; height: 25px; margin-left: 6px; padding-left: 5px; border: 1px solid #aaa; }
.swatch { width: 13px; height: 13px; margin-right: 7px; background: #000; }
.color-select .caret { position: absolute; right: 4px; top: 10px; }
.reset-btn.small { width: 79px; display: block; }
.dlg-foot { flex: 1; display: flex; align-items: center; padding: 0 12px; }
.dlg-note { flex: 1; }
.btn-ok, .btn-cancel { width: 80px; height: 26px; padding: 0; border-radius: 3px; font: inherit; }
.btn-ok { background: #2d7fe0; border: 1px solid #2d7fe0; color: #fff; margin-right: 6px; }
.btn-cancel { background: #f5f5f5; border: 1px solid #c8ccd4; color: #444; }

.ball {
  position: absolute;
  left: 1901px;
  top: 76px;
  width: 48px;
  height: 48px;
  padding-left: 4px;
  border: 2px solid #dcdcdc;
  border-radius: 50%;
  background: linear-gradient(#5fdc7a, #3cc75c);
  color: #fff;
  font: bold 12px/44px "Liberation Sans", sans-serif;
  box-shadow: 0 1px 2px rgba(0, 0, 0, 0.4);
}

.marks { position: absolute; left: 0; top: 0; width: 1920px; height: 1041px; pointer-events: none; }
.marks ellipse { fill: none; stroke: #f5190f; stroke-width: 9; }
.marks text { fill: #f5190f; font: 24px "Liberation Serif", serif; text-anchor: middle; }
```

FILE: script.js
```js
// right hand layer table: [name, level, shape state, name state, last child]
const layers = [
  ["所有构件", 0, "half", ""],
  ["轴线", 1, "on", "off"],
  ["轴网", 2, "on", "off"],
  ["辅助轴线", 2, "on", "off", true],
  ["柱", 1, "on", ""],
  ["柱", 2, "on", ""],
  ["构造柱", 2, "on", ""],
  ["砌体柱", 2, "on", "", true],
  ["墙", 1, "half", ""],
  ["剪力墙", 2, "on", ""],
  ["人防门框墙", 2, "on", ""],
  ["砌体墙", 2, "on", ""],
  ["砌体加筋", 2, "", ""],
  ["保温墙", 2, "on", ""],
  ["暗梁", 2, "", ""],
  ["墙垛", 2, "", ""],
  ["幕墙", 2, "on", "", true],
  ["门窗洞", 1, "", ""],
  ["门", 2, "", ""],
  ["窗", 2, "", ""],
  ["门联窗", 2, "", ""],
  ["墙洞", 2, "", ""],
  ["带形窗", 2, "", ""],
  ["带形洞", 2, "", ""],
  ["飘窗", 2, "", ""],
  ["老虎窗", 2, "", ""],
  ["过梁", 2, "", ""],
  ["壁龛", 2, "", "", true],
  ["梁", 1, "on", ""],
  ["梁", 2, "on", ""],
  ["连梁", 2, "on", ""],
  ["圈梁", 2, "on", "", true],
  ["板", 1, "half", ""],
  ["现浇板", 2, "", ""],
];

document.getElementById("layerRows").innerHTML = layers.map(([name, lv, a, b, last]) => `
  <div class="dt-row">
    <div class="dt-name lv${lv}${last ? " last" : ""}">${lv < 2 ? '<span class="exp"></span>' : ""}${name}</div>
    <div class="dt-cell"><span class="cb ${a}"></span></div>
    <div class="dt-cell"><span class="cb ${b}"></span></div>
  </div>`).join("");

// drawing area, coordinates are page pixels (the viewBox matches the element)
const cad = document.getElementById("cad");
const NS = "http://www.w3.org/2000/svg";
const RED = "#f00", GREEN = "#008000", ARC = "#8c0000", GRAY = "#4a4a4a";

function add(tag, attrs, text) {
  const el = document.createElementNS(NS, tag);
  for (const k in attrs) el.setAttribute(k, attrs[k]);
  if (text) el.textContent = text;
  cad.appendChild(el);
  return el;
}
function line(x1, y1, x2, y2, stroke) {
  add("line", { x1, y1, x2, y2, stroke, "shape-rendering": "crispEdges" });
}
function curve(pts, stroke = ARC) {
  let d = `M${pts[0][0]} ${pts[0][1]}`;
  for (let i = 0; i < pts.length - 1; i++) {
    const p0 = pts[i - 1] || pts[i], p1 = pts[i], p2 = pts[i + 1], p3 = pts[i + 2] || p2;
    d += `C${p1[0] + (p2[0] - p0[0]) / 6} ${p1[1] + (p2[1] - p0[1]) / 6} ${p2[0] - (p3[0] - p1[0]) / 6} ${p2[1] - (p3[1] - p1[1]) / 6} ${p2[0]} ${p2[1]}`;
  }
  add("path", { d, fill: "none", stroke });
}
function bubble(cx, cy, label) {
  const r = 12.5;
  let pts = "";
  for (let i = 0; i < 6; i++) {
    const a = Math.PI / 3 * i + Math.PI / 2;
    pts += `${cx + r * Math.cos(a)},${cy + r * Math.sin(a)} `;
  }
  add("polygon", { points: pts, fill: "none", stroke: GREEN });
  add("text", { x: cx, y: cy + 6.5, "font-size": 18, "text-anchor": "middle", textLength: label.length * 8.2, lengthAdjust: "spacingAndGlyphs" }, label);
}
function dim(x, y, rotate) {
  const attrs = { x, y, "font-size": 20, "text-anchor": "middle", textLength: 48, lengthAdjust: "spacingAndGlyphs" };
  if (rotate) attrs.transform = `rotate(-90 ${x} ${y})`;
  return add("text", attrs, "15000");
}

const xs = [], ys = [];
for (let i = 0; i < 18; i++) xs.push(Math.round(541 + 59.65 * i) + 0.5);
for (let j = 0; j < 14; j++) ys.push(Math.round(181 + 59.65 * j) + 0.5);
const gridTop = ys[0], gridBottom = ys[13], gridLeft = xs[0], gridRight = xs[17];

xs.forEach((x, i) => line(x, gridTop, x, gridBottom, i === 8 || i === 10 ? GRAY : RED));
ys.forEach((y) => line(gridLeft, y, gridRight, y, RED));
[6, 7, 8].forEach((j) => line(1297, ys[j], gridRight, ys[j], GRAY));

// arcs
curve([[978, 200], [1130, 225], [1297, 301], [1376, 414], [1436, 511], [1496, 626], [1517, 674], [1543, 730], [1552, 779], [1548, 816], [1537, 854], [1507, 896], [1436, 938], [1376, 950], [1190, 975], [1070, 982], [955, 970], [841, 948], [781, 933], [721, 915], [676, 898], [633, 880], [601, 865], [564, 838], [541, 810], [521, 770], [516, 733], [521, 680], [534, 643]]);
curve([[1297, 572], [1317, 583], [1376, 620], [1436, 669], [1496, 733], [1528, 779], [1548, 811]]);
curve([[1297, 658], [1317, 670], [1376, 714], [1423, 756]]);
curve([[1297, 808], [1376, 773], [1436, 736], [1496, 696], [1517, 674]]);
curve([[521, 720], [541, 735], [601, 780], [624, 795]]);
curve([[541, 642], [624, 705]]);
curve([[544, 815], [568, 778], [601, 730], [624, 707]]);
curve([[646, 837], [633, 882]]);
curve([[696, 837], [721, 848], [781, 875], [841, 897], [960, 922], [1070, 927], [1190, 921], [1290, 898], [1376, 870], [1436, 846], [1496, 813], [1550, 779]]);
curve([[1115, 836], [1127, 920], [1134, 980]]);

// green dimension lines and ticks
[169.5, 176.5, 962.5, 970.5].forEach((y) => line(gridLeft, y, gridRight, y, GREEN));
[529.5, 536.5, 1562.5, 1569.5].forEach((x) => line(x, gridTop, x, gridBottom, GREEN));
xs.forEach((x) => { line(x, 168, x, gridTop, GREEN); line(x, gridBottom, x, 975, GREEN); });
ys.forEach((y) => { line(524, y, gridLeft, y, GREEN); line(gridRight, y, 1573, y, GREEN); });

// dimension text
for (let i = 0; i < 17; i++) {
  const mid = (xs[i] + xs[i + 1]) / 2;
  dim(mid, 179);
  dim(mid, 972.5);
}
for (let j = 0; j < 13; j++) {
  const mid = (ys[j] + ys[j + 1]) / 2;
  dim(540, mid, true);
  dim(1572, mid, true);
}
// overlapping texts on the drawing
add("text", { x: 1049, y: 978, "font-size": 20, "text-anchor": "middle", textLength: 48, lengthAdjust: "spacingAndGlyphs" }, "25000");
dim(546, 575, true);
dim(1580, 567, true);

// axis bubbles
xs.forEach((x, i) => {
  bubble(x, 180, `${i + 3}.A`);
  bubble(x, 987, `${i + 3}.A`);
});
add("text", { x: 1137, y: 1004, "font-size": 18, "text-anchor": "middle", textLength: 33, lengthAdjust: "spacingAndGlyphs" }, "13.A");
"BCDEFGHJKLMNPQ".split("").forEach((c, j) => {
  bubble(512, ys[j], `${c}.1`);
  bubble(1585, ys[j], `${c}.1`);
});

// origin marker
add("path", { d: "M526 958V938", stroke: "#0f0", "stroke-width": 3 });
add("path", { d: "M526 930l-5 9h10z", fill: "#0f0" });
add("path", { d: "M530 960h14", stroke: "#f00", "stroke-width": 3 });
add("path", { d: "M554 960l-10-5v10z", fill: "#f00" });
add("circle", { cx: 526, cy: 960, r: 5.5, fill: "#0b10c0" });
add("path", { d: "M522 919l4 7 4-7M526 926v5", fill: "none", stroke: "#0f0" });
add("path", { d: "M558 955l8 10M566 955l-8 10", fill: "none", stroke: "#f00" });
```
